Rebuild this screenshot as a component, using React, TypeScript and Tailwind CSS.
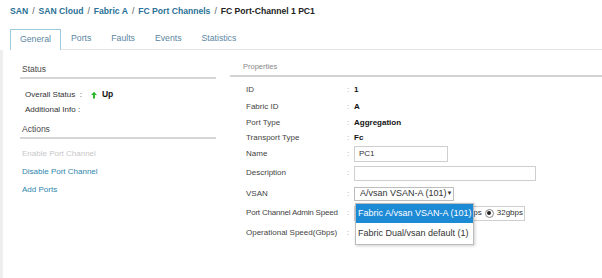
import React from 'react';

const crumbs = ['SAN', 'SAN Cloud', 'Fabric A', 'FC Port Channels'];
const tabs = ['General', 'Ports', 'Faults', 'Events', 'Statistics'];

// label row on the properties side
const Row = ({ label, h, tight, children }: { label: string; h: string; tight?: boolean; children?: React.ReactNode }) => (
  <div className={`flex items-center whitespace-nowrap ${h}`}>
    <span className={`w-[101px] shrink-0 text-[#444] ${tight ? 'tracking-[-0.2px]' : ''}`}>{label}</span>
    <span className="w-[7px] shrink-0 text-[#999]">:</span>
    <div className="flex items-center">{children}</div>
  </div>
);

const App: React.FC = () => {
  return (
    <div className="relative w-[602px] h-[278px] overflow-hidden bg-white font-['Liberation_Sans',Arial,sans-serif] text-[8px] whitespace-nowrap">
      {/* Breadcrumb */}
      <div className="flex items-center h-[22px] pl-[10px] pt-[1px] text-[8.6px] font-bold">
        {crumbs.map((c) => (
          <React.Fragment key={c}>
            <span className="text-[#2a7196]">{c}</span>
            <span className="mx-[4px] text-[#555] font-normal">/</span>
          </React.Fragment>
        ))}
        <span className="text-[#222]">FC Port-Channel 1 PC1</span>
      </div>

      {/* Tabs */}
      <div className="flex items-end h-[28px] pl-[10px] pt-[6px] text-[8.7px]">
        {tabs.map((t, i) => (
          <div
            key={t}
            className={
              i === 0
                ? 'h-[21px] w-[51px] flex items-center justify-center border border-b-0 border-[#9ccbe0] text-[#5a86a3]'
                : 'h-[21px] flex items-center px-[10px] border-b border-[#e4e4e4] text-[#5a86a3]'
            }
          >
            {t}
          </div>
        ))}
        <div className="flex-1 h-[21px] border-b border-[#e4e4e4]" />
      </div>

      {/* Body */}
      <div className="flex h-[228px]">
        <div className="w-[3px] bg-[#eeeeee]" />

        {/* Left column */}
        <div className="w-[227px] pl-[17px] pr-[14px] pt-[13px]">
          <div className="h-[16px] pl-[2px] text-[#4a4a4a] text-[8.5px] border-b-2 border-[#d6d6d6]">Status</div>
          <div className="pl-[5px] pt-[8px] text-[#333]">
            <div className="flex items-center h-[15px]">
              <span>Overall Status&nbsp;&nbsp;:</span>
              <svg width="6" height="8" viewBox="0 0 8 9" className="ml-[9px] mr-[5px]">
                <path d="M4 0 L8 4.5 H5.4 V9 H2.6 V4.5 H0 Z" fill="#2db52d" />
              </svg>
              <span className="font-bold text-[#111] text-[8.5px]">Up</span>
            </div>
            <div className="flex items-center h-[15px]">Additional Info :</div>
          </div>
          <div className="mt-[6px] h-[16px] pl-[2px] text-[#4a4a4a] text-[8.5px] border-b-2 border-[#d6d6d6]">Actions</div>
          <div className="pl-[2px] pt-[6px]">
            <div className="h-[18px] flex items-center text-[#c8c8c8]">Enable Port Channel</div>
            <div className="h-[18px] flex items-center text-[#2f86ad]">Disable Port Channel</div>
            <div className="h-[18px] flex items-center text-[#2f86ad]">Add Ports</div>
          </div>
        </div>

        {/* Right column */}
        <div className="flex-1 pt-[11px]">
          <div className="h-[16px] pl-[13px] text-[#888] text-[7.5px] border-b-2 border-[#d3d3d3]">Properties</div>
          <div className="pl-[16px] pt-[4px]">
            <Row label="ID" h="h-[17px]"><span className="font-bold text-[#111]">1</span></Row>
            <Row label="Fabric ID" h="h-[17px]"><span className="font-bold text-[#111]">A</span></Row>
            <Row label="Port Type" h="h-[16px]"><span className="font-bold text-[#111]">Aggregation</span></Row>
            <Row label="Transport Type" h="h-[14px]"><span className="font-bold text-[#111]">Fc</span></Row>
            <Row label="Name" h="h-[17px]">
              <div className="w-[94px] h-[16px] border border-[#cfcfcf] flex items-center px-[4px] text-[#333]">PC1</div>
            </Row>
            <Row label="Description" h="h-[22px]">
              <div className="w-[182px] h-[15px] border border-[#cfcfcf]" />
            </Row>
            <Row label="VSAN" h="h-[19px]">
              <div className="w-[100px] h-[14px] border border-[#bdbdbd] flex items-center justify-between pl-[5px] pr-[6px] text-[#333] text-[9px]">
                <span>A/vsan VSAN-A (101)</span>
                <span className="text-[6px]">▼</span>
              </div>
            </Row>
            <Row label="Port Channel Admin Speed" h="h-[20px]" tight>
              <div className="w-[171px] h-[15px] border border-[#cfcfcf] flex items-center justify-end pr-[1px] text-[#333] text-[8px]">
                <span className="mr-[3px]">ps</span>
                <span className="w-[9px] h-[9px] rounded-full border border-[#888] flex items-center justify-center mr-[3px]">
                  <span className="w-[4px] h-[4px] rounded-full bg-[#222]" />
                </span>
                <span>32gbps</span>
              </div>
            </Row>
            <Row label="Operational Speed(Gbps)" h="h-[20px]" />
          </div>
        </div>
      </div>

      {/* VSAN dropdown list, open */}
      <div className="absolute left-[355px] top-[203px] w-[119px] bg-white border border-[#bcbcbc] shadow-[1px_1px_3px_rgba(0,0,0,0.2)] text-[9px]">
        <div className="h-[19px] flex items-center pl-[2px] bg-[#1d8ad6] text-white">Fabric A/vsan VSAN-A (101)</div>
        <div className="h-[21px] flex items-center pl-[2px] text-[#333]">Fabric Dual/vsan default (1)</div>
      </div>
    </div>
  );
};

export default App;
